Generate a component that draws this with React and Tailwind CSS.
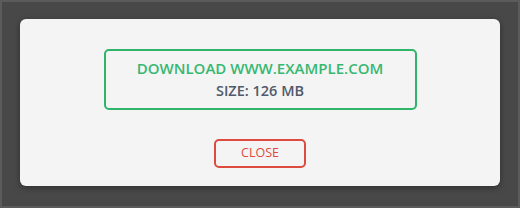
export default function App() {
  return (
    <div
      className="w-[520px] h-[208px] bg-[#484848] border-2 border-[#5b5b5b] pl-[18px] pt-[17px]"
      style={{ fontFamily: '"Open Sans", "Noto Sans", sans-serif' }}
    >
      <div className="w-[480px] h-[167px] bg-[#f4f4f4] rounded-md shadow-[0_2px_6px_rgba(0,0,0,0.35)] flex flex-col items-center pt-[30px]">
        {/* Download info */}
        <div className="w-[313px] h-[61px] border-2 border-[#2fb56a] rounded-[5px] flex flex-col items-center justify-center">
          <div className="text-[15px] leading-[20px] font-semibold text-[#36b870]">DOWNLOAD WWW.EXAMPLE.COM</div>
          <div className="text-[14.5px] leading-[20px] font-semibold text-[#505a6a] mt-[3px]">SIZE: 126 MB</div>
        </div>

        {/* Close */}
        <button className="mt-[29px] w-[92px] h-[29px] border-2 border-[#dd4b3e] rounded-[5px] text-[12.5px] text-[#dd4b3e] bg-transparent">
          CLOSE
        </button>
      </div>
    </div>
  );
}
